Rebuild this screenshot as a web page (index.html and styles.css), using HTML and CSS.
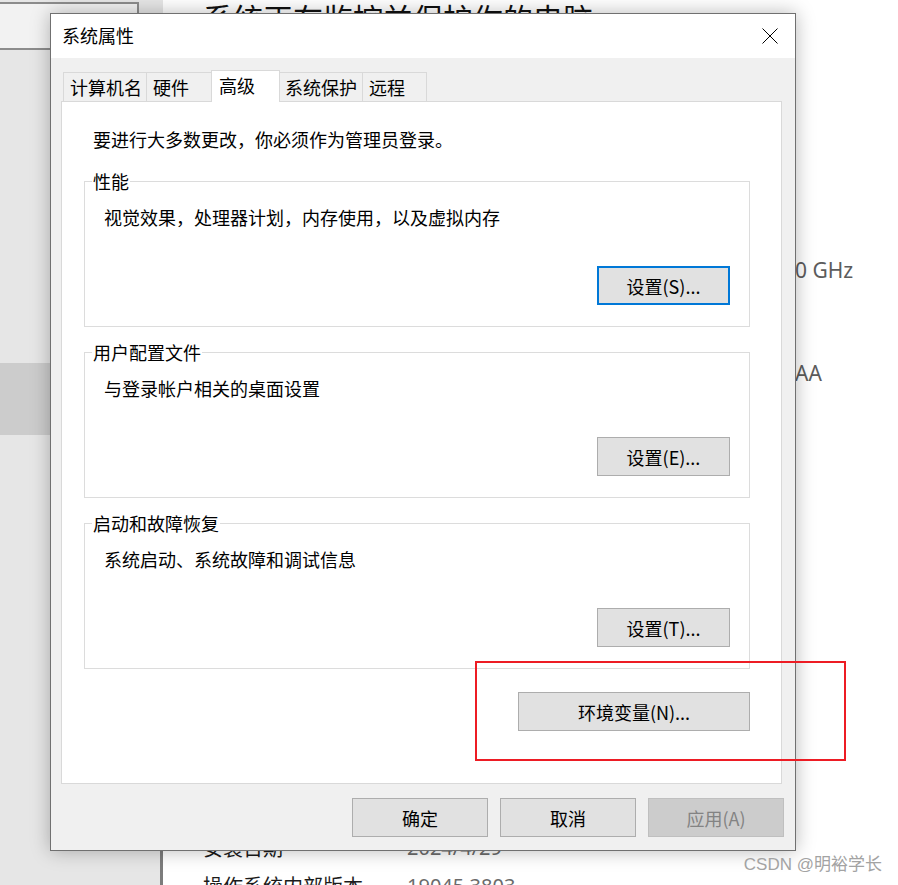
FILE: index.html
```html
<!DOCTYPE html>
<html lang="zh-CN">
<head>
<meta charset="utf-8">
<title>系统属性</title>
<link rel="stylesheet" href="styles.css">
</head>
<body>
<div class="page">
  <aside class="nav">
    <div class="nav-top"></div>
    <div class="nav-band"></div>
    <div class="nav-rest"></div>
  </aside>
  <main class="about">
    <h1 class="about-title">系统正在监控并保护你的电脑</h1>
    <div class="spec-tail spec-cpu">0 GHz</div>
    <div class="spec-tail spec-id">AA</div>
    <div class="spec-row spec-install"><span class="spec-label">安装日期</span><span class="spec-value">2024/4/29</span></div>
    <div class="spec-row"><span class="spec-label">操作系统内部版本</span><span class="spec-value">19045.3803</span></div>
  </main>
</div>

<section class="dialog">
  <header class="titlebar">
    <span class="title">系统属性</span>
    <button class="close" aria-label="关闭">
      <svg width="16" height="16" viewBox="0 0 16 16"><path d="M0.5 0.5 L15.5 15.5 M15.5 0.5 L0.5 15.5" stroke="#000" stroke-width="1" fill="none"/></svg>
    </button>
  </header>
  <div class="dialog-body">
    <div class="tabs">
      <div class="tab tab-name">计算机名</div>
      <div class="tab tab-hw">硬件</div>
      <div class="tab tab-adv tab-active">高级</div>
      <div class="tab tab-protect">系统保护</div>
      <div class="tab tab-remote">远程</div>
    </div>
    <div class="panel">
      <p class="intro">要进行大多数更改，你必须作为管理员登录。</p>
      <fieldset class="group group-first">
        <legend>性能</legend>
        <div class="group-body">
          <p class="group-text">视觉效果，处理器计划，内存使用，以及虚拟内存</p>
          <button class="btn btn-set btn-focus">设置(S)...</button>
        </div>
      </fieldset>
      <fieldset class="group">
        <legend>用户配置文件</legend>
        <div class="group-body">
          <p class="group-text">与登录帐户相关的桌面设置</p>
          <button class="btn btn-set">设置(E)...</button>
        </div>
      </fieldset>
      <fieldset class="group">
        <legend>启动和故障恢复</legend>
        <div class="group-body">
          <p class="group-text">系统启动、系统故障和调试信息</p>
          <button class="btn btn-set">设置(T)...</button>
        </div>
      </fieldset>
      <button class="btn btn-env">环境变量(N)...</button>
    </div>
    <div class="actions">
      <button class="btn btn-action">确定</button>
      <button class="btn btn-action">取消</button>
      <button class="btn btn-action btn-disabled">应用(A)</button>
    </div>
  </div>
</section>

<div class="highlight"></div>
<div class="watermark">CSDN @明裕学长</div>
</body>
</html>
```

FILE: styles.css
```css
* { box-sizing: border-box; }

html, body {
  margin: 0;
  padding: 0;
}

body {
  width: 898px;
  height: 885px;
  overflow: hidden;
  position: relative;
  background: #ffffff;
  font-family: "Noto Sans CJK SC", sans-serif;
  color: #000;
}

/* ---------- background page ---------- */
.page {
  display: flex;
  height: 885px;
}

.nav {
  width: 163px;
  flex: none;
  display: flex;
  flex-direction: column;
  background: #e6e6e6;
}

.nav-top {
  width: 142px;
  height: 48px;
  margin: 2px 0 0 -3px;
  border: 2px solid #8c8c8c;
  background: #f2f2f2;
}

.nav-band {
  height: 72px;
  margin-top: 313px;
  margin-right: 3px;
  background: #cccccc;
}

.nav-rest {
  flex: 1;
  border-right: 3px solid #7c7c7c;
}

.about {
  flex: 1;
  display: flex;
  flex-direction: column;
  padding-left: 40px;
  overflow: hidden;
}

.about-title {
  margin: -3px 0 0;
  font-size: 30px;
  font-weight: 400;
  line-height: 40px;
  white-space: nowrap;
  color: #111;
}

.spec-tail {
  padding-left: 592px;
  font-family: "Noto Sans", sans-serif;
  font-size: 21px;
  line-height: 30px;
  color: #5c5c5c;
  white-space: nowrap;
}

.spec-cpu { margin-top: 218px; }
.spec-id { margin-top: 73px; }

.spec-row {
  display: flex;
  font-size: 20px;
  line-height: 38px;
  white-space: nowrap;
}

.spec-install { margin-top: 441px; }

.spec-label {
  width: 204px;
  flex: none;
  color: #1b1b1b;
}

.spec-value {
  font-family: "Noto Sans", sans-serif;
  color: #6b6b6b;
}

/* ---------- dialog window ---------- */
.dialog {
  position: absolute;
  left: 50px;
  top: 13px;
  width: 746px;
  height: 838px;
  border: 1px solid #707070;
  background: #f0f0f0;
  box-shadow: 0 0 18px rgba(0, 0, 0, 0.28);
  display: flex;
  flex-direction: column;
}

.titlebar {
  height: 44px;
  flex: none;
  background: #ffffff;
  display: flex;
  align-items: center;
  justify-content: space-between;
  padding-left: 11px;
}

.title {
  font-size: 18px;
  line-height: 24px;
  padding-bottom: 3px;
}

.close {
  width: 50px;
  height: 44px;
  border: none;
  background: transparent;
  padding: 0;
  display: flex;
  align-items: center;
  justify-content: center;
}

.close svg { display: block; }

.dialog-body {
  flex: 1;
  display: flex;
  flex-direction: column;
  padding: 12px 13px 13px 10px;
}

/* tabs */
.tabs {
  display: flex;
  align-items: flex-end;
  height: 31px;
  margin-left: 2px;
}

.tab {
  height: 29px;
  display: flex;
  align-items: center;
  padding-left: 6px;
  padding-bottom: 1px;
  border: 1px solid #d9d9d9;
  border-bottom: none;
  border-right: none;
  background: #f0f0f0;
  font-size: 18px;
  line-height: 24px;
  white-space: nowrap;
}

.tab-name { width: 83px; }
.tab-hw { width: 67px; }
.tab-protect { width: 84px; }
.tab-remote { width: 65px; border-right: 1px solid #d9d9d9; }

.tab-active {
  position: relative;
  z-index: 1;
  width: 69px;
  height: 32px;
  margin: 0 -2px -1px;
  padding-left: 7px;
  padding-bottom: 3px;
  border-right: 1px solid #d9d9d9;
  background: #ffffff;
}

/* panel */
.panel {
  height: 683px;
  flex: none;
  border: 1px solid #d9d9d9;
  background: #ffffff;
  padding: 25px 31px 0 22px;
  display: flex;
  flex-direction: column;
}

.intro {
  margin: 0;
  padding-left: 9px;
  font-size: 18px;
  line-height: 24px;
}

.group {
  margin: 13px 0 0;
  padding: 0 0 21px;
  min-width: 0;
  border: 1px solid #dcdcdc;
}

.group-first { margin-top: 18px; }

.group legend {
  margin-left: 7px;
  padding: 0 1px;
  font-size: 18px;
  line-height: 24px;
}

.group-body {
  display: flex;
  flex-direction: column;
}

.group-text {
  margin: 12px 0 0 19px;
  font-size: 18px;
  line-height: 24px;
}

/* buttons */
.btn {
  height: 39px;
  padding: 0;
  border: 1px solid #adadad;
  background: #e1e1e1;
  font-family: "Noto Sans CJK SC", sans-serif;
  font-size: 18px;
  line-height: 24px;
  color: #000;
  white-space: nowrap;
}

.btn-set {
  width: 133px;
  align-self: flex-end;
  margin: 37px 19px 0 0;
}

.btn-focus {
  border: 2px solid #0078d7;
}

.btn-env {
  width: 232px;
  align-self: flex-end;
  margin-top: 23px;
}

.actions {
  display: flex;
  justify-content: flex-end;
  gap: 12px;
  margin-top: 14px;
  margin-right: -2px;
}

.btn-action { width: 136px; }

.btn-disabled {
  background: #cccccc;
  border-color: #bfbfbf;
  color: #838383;
}

/* ---------- annotations ---------- */
.highlight {
  position: absolute;
  left: 475px;
  top: 661px;
  width: 371px;
  height: 100px;
  border: 2px solid #ed1c24;
}

.watermark {
  position: absolute;
  right: 16px;
  top: 854px;
  font-family: "Liberation Sans", "Noto Sans CJK SC", sans-serif;
  font-size: 17px;
  line-height: 22px;
  color: #a3a3a3;
  white-space: nowrap;
}
```
